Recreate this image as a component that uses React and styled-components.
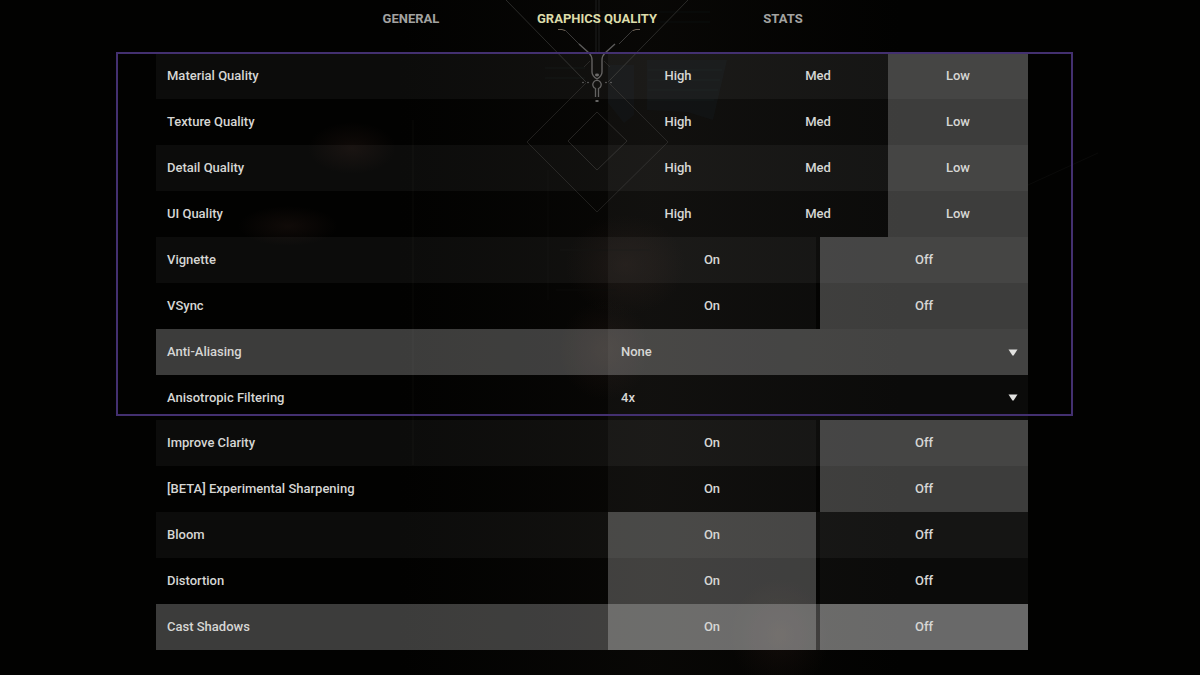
import { useState } from 'react';
import styled, { createGlobalStyle } from 'styled-components'

const GlobalStyle = createGlobalStyle`
    * {
        box-sizing: border-box;
    }

    body {
        margin: 0;
        background-color: #020201;
        color: #d6d6d4;
        font-family: Roboto, "Liberation Sans", sans-serif;
        font-size: 13px;
        font-weight: 500;
        line-height: 20px;
    }
`;

const Page = styled.div`
    position: relative;
    min-height: 100vh;
    overflow: hidden;
`;

const Scene = styled.svg`
    position: absolute;
    top: 0;
    left: 0;
    width: 100%;
    height: 100%;
`;

const Content = styled.div`
    position: relative;
`;

const Tabs = styled.nav`
    display: flex;
    justify-content: center;
    height: 53px;
    padding-right: 6px;
`;

const Tab = styled.button`
    width: 186px;
    height: 36px;
    padding: 0;
    border: 0;
    background-color: transparent;
    color: ${(props) => (props.$active ? "#dcdcaa" : "#a3a3a1")};
    font-family: inherit;
    font-size: 13px;
    font-weight: 700;
    cursor: pointer;
`;

const Settings = styled.main`
    padding: 0 172px 24px 156px;
`;

const Group = styled.section`
    position: relative;
`;

const Highlight = styled.div`
    position: absolute;
    top: -1px;
    right: -45px;
    bottom: 4px;
    left: -40px;
    border: 2px solid #433070;
    pointer-events: none;
`;

const rowColor = (props) => {
    if(props.$lit) return "rgba(255, 255, 255, 0.23)"
    return props.$striped ? "rgba(255, 255, 255, 0.045)" : "transparent"
}

const Row = styled.div`
    display: flex;
    height: ${(props) => (props.$short ? "45px" : "46px")};
    background-color: ${rowColor};
`;

const Name = styled.label`
    display: flex;
    flex: 1;
    align-items: center;
    padding-left: 11px;
`;

const Options = styled.div`
    display: flex;
    width: 420px;
    gap: ${(props) => (props.$count === 2 ? "4px" : "0")};
`;

const Option = styled.label`
    display: flex;
    flex: 1;
    align-items: center;
    justify-content: center;
    background-color: ${(props) => (props.$lit ? "rgba(255, 255, 255, 0.235)" : "rgba(255, 255, 255, 0.04)")};
    cursor: pointer;

    input {
        appearance: none;
        width: 0;
        height: 0;
        margin: 0;
    }
`;

const Dropdown = styled.div`
    display: flex;
    align-items: center;
    width: 420px;
    padding-right: 10px;
    background-color: rgba(255, 255, 255, 0.04);

    select {
        flex: 1;
        height: 100%;
        padding: 0 0 0 13px;
        border: 0;
        appearance: none;
        background-color: transparent;
        color: inherit;
        font: inherit;
    }

    option {
        background-color: #222;
    }
`;

const levels = ['High', 'Med', 'Low']
const toggle = ['On', 'Off']

const mainSettings = [
    { id: 'material', name: 'Material Quality', options: levels, value: 'Low' },
    { id: 'texture', name: 'Texture Quality', options: levels, value: 'Low' },
    { id: 'detail', name: 'Detail Quality', options: levels, value: 'Low' },
    { id: 'ui', name: 'UI Quality', options: levels, value: 'Low' },
    { id: 'vignette', name: 'Vignette', options: toggle, value: 'Off' },
    { id: 'vsync', name: 'VSync', options: toggle, value: 'Off' },
    { id: 'aa', name: 'Anti-Aliasing', select: true, options: ['None', 'MSAA 2x', 'MSAA 4x', 'FXAA'], value: 'None', lit: true },
    { id: 'af', name: 'Anisotropic Filtering', select: true, options: ['1x', '2x', '4x', '8x', '16x'], value: '4x', short: true },
]

const moreSettings = [
    { id: 'clarity', name: 'Improve Clarity', options: toggle, value: 'Off' },
    { id: 'sharpening', name: '[BETA] Experimental Sharpening', options: toggle, value: 'Off' },
    { id: 'bloom', name: 'Bloom', options: toggle, value: 'On' },
    { id: 'distortion', name: 'Distortion', options: toggle, value: 'On' },
    { id: 'shadows', name: 'Cast Shadows', options: toggle, value: 'On', lit: true, hovered: 'Off' },
]

const Arrow = () => (
    <svg width="10" height="7" viewBox="0 0 10 7" aria-hidden="true">
        <path d="M0.5 0.5h9L5.6 6.4H4.4z" fill="#e2e2e0" />
    </svg>
)

const Setting = (props) => {
    const { setting, striped } = props
    const [value, setValue] = useState(setting.value)

    if(setting.select) {
        return (
            <Row $striped={striped} $lit={setting.lit} $short={setting.short}>
                <Name htmlFor={setting.id}>{setting.name}</Name>
                <Dropdown>
                    <select id={setting.id} value={value} onChange={(e) => setValue(e.target.value)}>
                        {setting.options.map((option) => <option key={option}>{option}</option>)}
                    </select>
                    <Arrow />
                </Dropdown>
            </Row>
        )
    }

    return (
        <Row $striped={striped} $lit={setting.lit} role="radiogroup" aria-labelledby={setting.id}>
            <Name as="span" id={setting.id}>{setting.name}</Name>
            <Options $count={setting.options.length}>
                {setting.options.map((option) => (
                    <Option key={option} $lit={option === value || option === setting.hovered}>
                        <input type="radio" name={setting.id} value={option} checked={option === value} onChange={() => setValue(option)} />
                        {option}
                    </Option>
                ))}
            </Options>
        </Row>
    )
}

// Dim game scene with the line emblem that hangs under the middle tab
const Backdrop = () => (
    <Scene viewBox="0 0 1200 675" preserveAspectRatio="xMidYMin slice" aria-hidden="true">
        <defs>
            <radialGradient id="warm">
                <stop offset="0" stopColor="#2a1a15" stopOpacity="0.35" />
                <stop offset="1" stopColor="#2a1a15" stopOpacity="0" />
            </radialGradient>
            <linearGradient id="room" x1="0" x2="1" y1="0" y2="0">
                <stop offset="0" stopColor="#100e0b" stopOpacity="0" />
                <stop offset="0.5" stopColor="#100e0b" stopOpacity="0.45" />
                <stop offset="1" stopColor="#100e0b" stopOpacity="0" />
            </linearGradient>
        </defs>
        <rect x="400" width="500" height="675" fill="url(#room)" />
        <ellipse cx="352" cy="148" rx="44" ry="26" fill="url(#warm)" />
        <ellipse cx="288" cy="226" rx="50" ry="20" fill="url(#warm)" />
        <ellipse cx="625" cy="265" rx="60" ry="50" fill="url(#warm)" />
        <ellipse cx="605" cy="350" rx="46" ry="50" fill="url(#warm)" />
        <ellipse cx="780" cy="635" rx="50" ry="56" fill="url(#warm)" />
        <path d="M647 60h80l-14 60-26-8-40-2zM608 65h26v50l-10 8-16-20z" fill="#0a0e0f" opacity="0.6" />
        <g stroke="#0f1415" strokeWidth="1" opacity="0.6">
            <path d="M545 12h90M545 22h90M545 68h40M545 78h40M648 70h74M648 80h72M648 90h70M648 100h66M660 12h50M660 22h50" />
        </g>
        <g stroke="#0a0a09" fill="none">
            <path d="M413 120v345M548 170v130M560 250h90M556 290h60M1028 185l70-32" />
        </g>
        <g stroke="#2b2b29" fill="none">
            <path d="M506 0l80 82M688 0l-80 82" />
            <path d="M596 0v54M599 0v54" stroke="#1f1f1e" />
            <path d="M586 83l-59 59 70 70 71-70-59-59M590 61l-6 6M604 61l6 6" stroke="#201f1d" />
            <path d="M597 112l-29 29 29 29 30-29z" stroke="#252422" />
        </g>
        <g stroke="#5c5b5a" fill="none">
            <path d="M565 30l14 14M633 30l-14 14" stroke="#3b3a39" />
            <path d="M558 29.5h4l3 1M640 29.5h-4l-3 1" stroke="#75685a" />
            <path d="M579 44l10 9q3 3 3 7v12q0 4 5 7q5-3 5-7v-12q0-4 3-7l10-9" strokeWidth="1.4" />
            <path d="M595.5 97v-8.500a4.200 4.200 0 1 1 3 0v8.500" strokeWidth="1.3" />
        </g>
        <g fill="#656463">
            <ellipse cx="597" cy="75" rx="2" ry="1.4" />
            <rect x="595.5" y="100" width="3" height="2" />
            <circle cx="583" cy="82.5" r="0.8" />
            <circle cx="588" cy="82.5" r="0.8" />
            <circle cx="606" cy="82.5" r="0.8" />
            <circle cx="611" cy="82.5" r="0.8" />
        </g>
    </Scene>
)

const App = () => {
    const [tab, setTab] = useState('GRAPHICS QUALITY')

    return (
        <Page>
            <GlobalStyle />
            <Backdrop />
            <Content>
                <Tabs>
                    {['GENERAL', 'GRAPHICS QUALITY', 'STATS'].map((name) => (
                        <Tab key={name} $active={name === tab} onClick={() => setTab(name)}>{name}</Tab>
                    ))}
                </Tabs>
                <Settings>
                    <Group>
                        {mainSettings.map((setting, i) => <Setting key={setting.id} setting={setting} striped={i % 2 === 0} />)}
                        <Highlight />
                    </Group>
                    <Group>
                        {moreSettings.map((setting, i) => <Setting key={setting.id} setting={setting} striped={i % 2 === 0} />)}
                    </Group>
                </Settings>
            </Content>
        </Page>
    )
}

export default App;
